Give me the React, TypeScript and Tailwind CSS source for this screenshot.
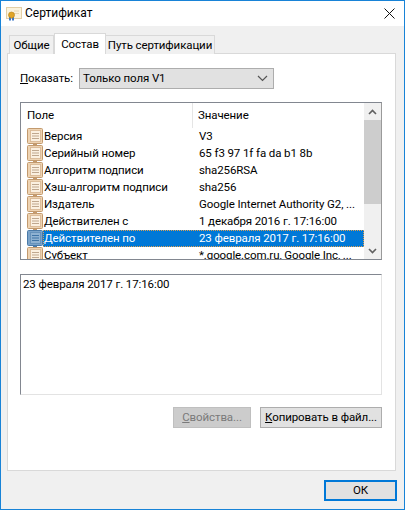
const rows = [
  ["Версия", "V3"],
  ["Серийный номер", "65 f3 97 1f fa da b1 8b"],
  ["Алгоритм подписи", "sha256RSA"],
  ["Хэш-алгоритм подписи", "sha256"],
  ["Издатель", "Google Internet Authority G2, ..."],
  ["Действителен с", "1 декабря 2016 г. 17:16:00"],
  ["Действителен по", "23 февраля 2017 г. 17:16:00"],
  ["Субъект", "*.google.com.ru, Google Inc, ..."],
];

function FieldIcon({ selected }: { selected?: boolean }) {
  const edge = selected ? "#4a7aa8" : "#c39a6e";
  const fill = selected ? "#7ba3c9" : "#eed3b2";
  const page = selected ? "#8fb2d2" : "#fbf0e0";
  const line = selected ? "#3f74a6" : "#bfa78e";
  return (
    <svg width="16" height="17" viewBox="0 0 16 17" className="shrink-0">
      <rect x="0.5" y="0.5" width="15" height="15" rx="1" fill={fill} stroke={edge} />
      <rect x="3.5" y="2.5" width="10" height="11" fill={page} stroke={edge} strokeOpacity="0.5" />
      <path d="M5 5.5h7M5 8h7M5 10.5h7" stroke={line} />
      <path d="M6 16h4v1H6z" fill={edge} />
    </svg>
  );
}

function CertIcon() {
  return (
    <svg width="16" height="16" viewBox="0 0 16 16" className="shrink-0">
      <rect x="0.5" y="1.5" width="15" height="11" fill="#fbf3dd" stroke="#e3cfa6" />
      <path d="M8 5h5M8 7.5h5" stroke="#e6d6b4" />
      <path d="M3 11h2v4l-1-1-1 1zM6 11h2v4l-1-1-1 1z" fill="#3d78c8" />
      <circle cx="5.5" cy="9" r="3" fill="#e0a526" stroke="#b77f14" strokeWidth="0.6" />
    </svg>
  );
}

function Chevron({ up }: { up?: boolean }) {
  return (
    <svg width="9" height="6" viewBox="0 0 9 6">
      <path d={up ? "M1 5l3.5-3.5L8 5" : "M1 1l3.5 3.5L8 1"} fill="none" stroke="#606060" strokeWidth="1.6" />
    </svg>
  );
}

export default function App() {
  return (
    <div className="flex h-[510px] w-[405px] flex-col overflow-hidden border border-[#1883d7] bg-[#f0f0f0] font-['Roboto',sans-serif] text-[11.5px] leading-[17px] tracking-[-0.1px] text-black">
      <div className="flex h-[25px] shrink-0 items-center bg-white pr-[9px] pl-[5px]">
        <CertIcon />
        <span className="ml-[3px] flex-1 text-[12px] tracking-normal">Сертификат</span>
        <svg width="11" height="11" viewBox="0 0 11 11">
          <path d="M0.5 0.5l10 10M10.5 0.5l-10 10" stroke="#111" strokeWidth="1" />
        </svg>
      </div>

      <div className="flex h-[445px] shrink-0 flex-col pt-[7px] pr-[8px] pl-[6px]">
        <div className="relative z-10 -mb-px flex h-[21px] shrink-0 items-end pl-[2px] whitespace-nowrap">
          <div className="flex h-[19px] w-[45px] items-center justify-center border border-b-0 border-[#d9d9d9] bg-[#f0f0f0]">Общие</div>
          <div className="flex h-[21px] w-[52px] items-center justify-center border border-b-0 border-[#d9d9d9] bg-white">Состав</div>
          <div className="flex h-[19px] w-[109px] items-center justify-center border border-b-0 border-l-0 border-[#d9d9d9] bg-[#f0f0f0]">Путь сертификации</div>
        </div>

        <div className="flex flex-1 flex-col border border-[#d9d9d9] bg-white pt-[14px] pr-[12px] pl-[12px]">
          <div className="flex h-[21px] shrink-0 items-center">
            <span className="w-[59px]"><span className="underline">П</span>оказать:</span>
            <div className="flex h-[21px] w-[195px] items-center justify-between border border-[#adadad] bg-[#e1e1e1] pr-[4px] pl-[3px]">
              <span>Только поля V1</span>
              <svg width="11" height="7" viewBox="0 0 11 7" className="mr-[1px]">
                <path d="M1 1l4.5 4.5L10 1" fill="none" stroke="#555" strokeWidth="1.2" />
              </svg>
            </div>
          </div>

          <div className="mt-[13px] flex h-[158px] w-[362px] shrink-0 overflow-hidden border border-t-[#828790] border-r-[#9a9a9a] border-b-[#828790] border-l-[#828790] bg-white">
            <div className="min-w-0 flex-1 overflow-hidden">
              <div className="flex h-[25px] items-center">
                <span className="w-[172px] border-r border-[#e5e5e5] pl-[6px] leading-[25px]">Поле</span>
                <span className="pl-[5px]">Значение</span>
              </div>
              {rows.map(([name, value], i) => {
                const selected = i === 6;
                return (
                  <div key={name} className="flex h-[17px] items-center pl-[6px]">
                    <FieldIcon selected={selected} />
                    {selected ? (
                      <div className="flex h-[17px] flex-1 items-center border border-dotted border-[#e0a050] bg-[#0078d7] text-white">
                        <span className="w-[150px] whitespace-nowrap">{name}</span>
                        <span className="whitespace-nowrap pl-[5px]">{value}</span>
                      </div>
                    ) : (
                      <div className="flex flex-1 items-center">
                        <span className="w-[150px] pl-[1px] whitespace-nowrap">{name}</span>
                        <span className="whitespace-nowrap pl-[6px]">{value}</span>
                      </div>
                    )}
                  </div>
                );
              })}
            </div>
            <div className="flex w-[17px] shrink-0 flex-col bg-[#f0f0f0]">
              <div className="flex h-[17px] items-center justify-center"><Chevron up /></div>
              <div className="h-[84px] shrink-0 bg-[#cdcdcd]" />
              <div className="flex-1" />
              <div className="flex h-[17px] items-center justify-center"><Chevron /></div>
            </div>
          </div>

          <div className="mt-[14px] h-[121px] w-[362px] shrink-0 border border-t-[#828790] border-r-[#e3e3e3] border-b-[#e3e3e3] border-l-[#828790] px-[2px] py-[1px]">
            23 февраля 2017 г. 17:16:00
          </div>

          <div className="mt-[12px] flex w-[362px] justify-end gap-[9px] whitespace-nowrap">
            <div className="flex h-[21px] w-[78px] items-center justify-center border border-[#bfbfbf] bg-[#cccccc] text-[#7a7a7a]">
              <span><span className="underline">С</span>войства...</span>
            </div>
            <div className="flex h-[21px] w-[122px] items-center justify-center border border-[#adadad] bg-[#e1e1e1]">
              <span><span className="underline">К</span>опировать в файл...</span>
            </div>
          </div>
        </div>
      </div>

      <div className="flex flex-1 items-start justify-end pt-[9px] pr-[7px]">
        <div className="flex h-[21px] w-[73px] items-center justify-center border-2 border-[#0078d7] bg-[#e1e1e1]">ОК</div>
      </div>
    </div>
  );
}
